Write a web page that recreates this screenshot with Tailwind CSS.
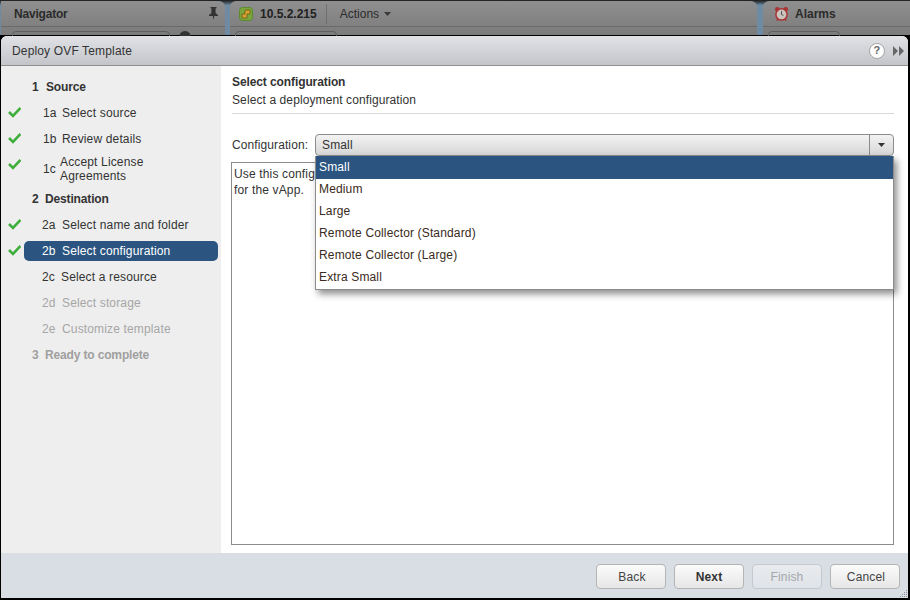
<!DOCTYPE html>
<html lang="en">
<head>
  <meta charset="UTF-8">
  <title>Deploy OVF Template</title>
  <script src="https://cdn.jsdelivr.net/npm/@tailwindcss/browser@4"></script>
</head>
<body class="relative w-[910px] h-[600px] overflow-hidden bg-black font-['Liberation_Sans',Arial,sans-serif] text-[12px] tracking-[0.15px] text-[#333]">

  <!-- vSphere panels behind the dialog -->
  <div class="flex h-[35px] pt-px gap-[5px] pl-px bg-gradient-to-b from-[#1a1a1a] to-[#6f8ba3] to-15%">
    <div class="w-[224px] h-full rounded-tr-[6px] bg-gradient-to-b from-[#8f8f8f] to-[#7b7b7b]">
      <div class="flex items-center justify-between h-[26px] pl-[13px] pr-[7px] border-b border-[#6a6a6a]">
        <span class="font-bold tracking-[-0.2px] text-[#2b2b2b]">Navigator</span>
        <svg width="9" height="13" viewBox="0 0 9 13"><path d="M1.5 0h6v1.2H6.6V6L9 8v1H5.2L4.5 13 3.8 9H0V8l2.4-2V1.2h-.9z" fill="#333"/></svg>
      </div>
      <div class="flex mt-[4px] ml-[11px]">
        <div class="w-[158px] h-[10px] rounded-t-[4px] border border-[#5f5f5f]"></div>
        <div class="ml-[9px] w-[12px] h-[8px] rounded-t-full bg-[#333]"></div>
      </div>
    </div>
    <div class="w-[527px] h-full rounded-t-[6px] bg-gradient-to-b from-[#8f8f8f] to-[#7b7b7b]">
      <div class="flex items-center h-[26px] pl-[9px] border-b border-[#6a6a6a]">
        <svg width="14" height="14" viewBox="0 0 14 14"><rect x="0.5" y="0.5" width="13" height="13" rx="3" fill="#7aa63c" stroke="#5c8a2a"/><path d="M6 3h5v4H8v4H3V7h3z" fill="#d9a12b" stroke="#6a5a1a" stroke-width="0.8"/></svg>
        <span class="ml-[7px] font-bold tracking-normal text-[#222]">10.5.2.215</span>
        <div class="ml-[9px] w-px h-[20px] bg-[#6f6f6f]"></div>
        <span class="ml-[13px] tracking-normal text-[#2b2b2b]">Actions</span>
        <svg class="ml-[5px]" width="7" height="4" viewBox="0 0 7 4"><path d="M0 0h7L3.5 4z" fill="#3a3a3a"/></svg>
      </div>
      <div class="mt-[4px] ml-[5px] w-[102px] h-[10px] rounded-t-[4px] border border-[#5f5f5f]"></div>
    </div>
    <div class="ml-px flex-1 h-full rounded-tl-[6px] bg-gradient-to-b from-[#8f8f8f] to-[#7b7b7b]">
      <div class="flex items-center h-[26px] pl-[11px] border-b border-[#6a6a6a]">
        <svg width="15" height="16" viewBox="0 0 16 16"><circle cx="3.5" cy="3" r="2.5" fill="#a33"/><circle cx="12.5" cy="3" r="2.5" fill="#a33"/><path d="M3 15l2-3M13 15l-2-3" stroke="#a33" stroke-width="1.6"/><circle cx="8" cy="8.5" r="6" fill="#c9c4be" stroke="#a33" stroke-width="1.6"/><path d="M8 5v3.5l2 1" stroke="#444" fill="none"/></svg>
        <span class="ml-[6px] font-bold tracking-normal text-[#2b2b2b]">Alarms</span>
      </div>
      <div class="mt-[4px] ml-[5px] w-[72px] h-[10px] rounded-t-[4px] border border-[#5f5f5f]"></div>
    </div>
  </div>

  <!-- dialog -->
  <div class="absolute left-px top-[36px] w-[907px] h-[562px] flex flex-col rounded-t-[6px] overflow-hidden bg-white">
    <div class="flex items-center justify-between h-[30px] pl-[11px] pr-[4px] bg-gradient-to-b from-[#e0e2e6] to-[#c3c5ca] border-b border-[#8f8f8f]">
      <span class="text-[#333]">Deploy OVF Template</span>
      <div class="flex items-center gap-[8px]">
        <div class="flex items-center justify-center w-[16px] h-[16px] rounded-full bg-white border border-[#a5a5a5] font-bold text-[11px] text-[#666]">?</div>
        <svg width="11" height="10" viewBox="0 0 11 10"><path d="M0 0l5 5-5 5zM6 0l5 5-5 5z" fill="#666"/></svg>
      </div>
    </div>

    <div class="flex flex-1 min-h-0">
      <!-- wizard steps -->
      <div class="w-[220px] pt-[8px] bg-[#eeeeee]">
        <div class="flex items-center h-[26px] pl-[31px] font-bold tracking-[-0.15px]"><span class="w-[14px]">1</span>Source</div>
        <div class="relative flex items-center h-[26px] pl-[42px]">
          <svg class="absolute left-[7px] top-[7px]" width="13" height="11" viewBox="0 0 13 11"><path d="M1 5l4 4 7.5-8" fill="none" stroke="#3fae3a" stroke-width="2.6"/></svg>
          <span class="w-[19px]">1a</span>Select source
        </div>
        <div class="relative flex items-center h-[26px] pl-[42px]">
          <svg class="absolute left-[7px] top-[7px]" width="13" height="11" viewBox="0 0 13 11"><path d="M1 5l4 4 7.5-8" fill="none" stroke="#3fae3a" stroke-width="2.6"/></svg>
          <span class="w-[19px]">1b</span>Review details
        </div>
        <div class="relative flex items-center h-[34px] pl-[42px]">
          <svg class="absolute left-[7px] top-[7px]" width="13" height="11" viewBox="0 0 13 11"><path d="M1 5l4 4 7.5-8" fill="none" stroke="#3fae3a" stroke-width="2.6"/></svg>
          <span class="w-[17px]">1c</span>
          <span class="leading-[14px]">Accept License<br>Agreements</span>
        </div>
        <div class="flex items-center h-[26px] pl-[31px] font-bold tracking-[-0.15px]"><span class="w-[13px]">2</span>Destination</div>
        <div class="relative flex items-center h-[26px] pl-[41px]">
          <svg class="absolute left-[7px] top-[7px]" width="13" height="11" viewBox="0 0 13 11"><path d="M1 5l4 4 7.5-8" fill="none" stroke="#3fae3a" stroke-width="2.6"/></svg>
          <span class="w-[20px]">2a</span>Select name and folder
        </div>
        <div class="relative flex items-center h-[26px] pl-[23px]">
          <svg class="absolute left-[7px] top-[7px]" width="13" height="11" viewBox="0 0 13 11"><path d="M1 5l4 4 7.5-8" fill="none" stroke="#3fae3a" stroke-width="2.6"/></svg>
          <div class="flex items-center w-[194px] h-[20px] pl-[18px] rounded-[5px] bg-[#2b5580] text-white"><span class="w-[20px]">2b</span>Select configuration</div>
        </div>
        <div class="flex items-center h-[26px] pl-[41px]"><span class="w-[19px]">2c</span>Select a resource</div>
        <div class="flex items-center h-[26px] pl-[41px] text-[#a6a6a6]"><span class="w-[20px]">2d</span>Select storage</div>
        <div class="flex items-center h-[26px] pl-[41px] text-[#a6a6a6]"><span class="w-[20px]">2e</span>Customize template</div>
        <div class="flex items-center h-[26px] pl-[31px] font-bold tracking-[-0.15px] text-[#a0a0a0]"><span class="w-[13px]">3</span>Ready to complete</div>
      </div>

      <!-- page body -->
      <div class="relative flex-1 flex flex-col pl-[11px] pr-[14px] pt-[8px] pb-[8px]">
        <div class="font-bold tracking-[-0.1px] leading-[16px] text-[#333]">Select configuration</div>
        <div class="mt-[2px] leading-[16px] pb-[5px] tracking-[0.1px] border-b border-[#d9d9d9]">Select a deployment configuration</div>
        <div class="flex items-center mt-[20px] h-[22px]">
          <span class="w-[83px] tracking-[0.1px]">Configuration:</span>
          <div class="flex-1 flex items-center justify-between h-[22px] pl-[6px] rounded-[4px] border border-[#8c8c8c] bg-gradient-to-b from-[#f3f3f3] to-[#d6d6d6]">
            <span>Small</span>
            <div class="flex items-center justify-center w-[24px] h-[20px] border-l border-[#8c8c8c]">
              <svg width="7" height="4" viewBox="0 0 7 4"><path d="M0 0h7L3.5 4z" fill="#333"/></svg>
            </div>
          </div>
        </div>
        <div class="flex-1 mt-[6px] ml-[-1px] pl-[2px] pt-[3px] border border-[#8c8c8c] leading-[16px]">
          Use this configuration<br>for the vApp.
        </div>

        <!-- open dropdown list -->
        <div class="absolute left-[94px] top-[90px] w-[579px] pb-px border border-[#8c8c8c] border-t-0 bg-white shadow-[3px_4px_7px_rgba(0,0,0,0.45)] text-[#3a2a20]">
          <div class="h-[23px] pl-[3px] leading-[22px] bg-[#2b5580] text-white">Small</div>
          <div class="h-[21px] pl-[3px] leading-[20px]">Medium</div>
          <div class="h-[22px] pl-[3px] leading-[22px]">Large</div>
          <div class="h-[22px] pl-[3px] leading-[22px]">Remote Collector (Standard)</div>
          <div class="h-[22px] pl-[3px] leading-[22px]">Remote Collector (Large)</div>
          <div class="h-[22px] pl-[3px] leading-[22px]">Extra Small</div>
        </div>
      </div>
    </div>

    <!-- footer buttons -->
    <div class="relative flex items-start justify-end gap-[8px] h-[45px] pt-[11px] pr-[8px] bg-[#d9dee5]">
      <button class="w-[70px] h-[25px] pl-[2px] rounded-[4px] border border-[#b5b5b5] bg-gradient-to-b from-[#fbfbfb] to-[#e6e6e6] text-[#444]">Back</button>
      <button class="w-[70px] h-[25px] rounded-[4px] border border-[#b5b5b5] bg-gradient-to-b from-[#fbfbfb] to-[#e6e6e6] font-bold text-[#333]">Next</button>
      <button class="w-[70px] h-[25px] rounded-[4px] border border-[#c4c9cf] bg-gradient-to-b from-[#e9ebee] to-[#dfe3e8] text-[#a3a6aa]">Finish</button>
      <button class="w-[70px] h-[25px] pl-[2px] rounded-[4px] border border-[#b5b5b5] bg-gradient-to-b from-[#fbfbfb] to-[#e6e6e6] text-[#444]">Cancel</button>
      <!-- resize grip -->
      <svg class="absolute right-0 bottom-0" width="9" height="9" viewBox="0 0 9 9"><path d="M7 1h1v1H7zM5 3h1v1H5zM7 3h1v1H7zM3 5h1v1H3zM5 5h1v1H5zM7 5h1v1H7zM1 7h1v1H1zM3 7h1v1H3zM5 7h1v1H5zM7 7h1v1H7z" fill="#8b9096"/></svg>
    </div>
  </div>
</body>
</html>
